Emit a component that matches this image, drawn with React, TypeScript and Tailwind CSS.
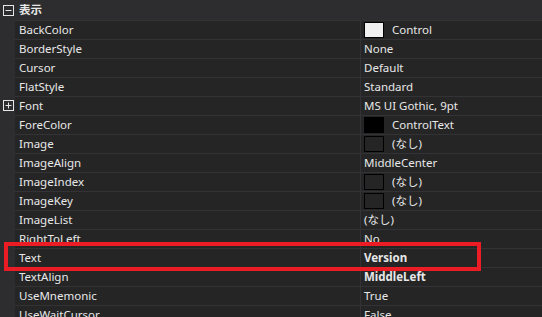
type Row = { name: string; value: string; swatch?: string; bold?: boolean; expand?: boolean };

const rows: Row[] = [
  { name: "BackColor", value: "Control", swatch: "#f0f0f0" },
  { name: "BorderStyle", value: "None" },
  { name: "Cursor", value: "Default" },
  { name: "FlatStyle", value: "Standard" },
  { name: "Font", value: "MS UI Gothic, 9pt", expand: true },
  { name: "ForeColor", value: "ControlText", swatch: "#000000" },
  { name: "Image", value: "(なし)", swatch: "transparent" },
  { name: "ImageAlign", value: "MiddleCenter" },
  { name: "ImageIndex", value: "(なし)", swatch: "transparent" },
  { name: "ImageKey", value: "(なし)", swatch: "transparent" },
  { name: "ImageList", value: "(なし)" },
  { name: "RightToLeft", value: "No" },
  { name: "Text", value: "Version", bold: true },
  { name: "TextAlign", value: "MiddleLeft", bold: true },
  { name: "UseMnemonic", value: "True" },
  { name: "UseWaitCursor", value: "False" },
];

function BoxIcon({ plus }: { plus?: boolean }) {
  return (
    <svg width="11" height="11" viewBox="0 0 11 11" className="block">
      <rect x="0.5" y="0.5" width="10" height="10" fill="none" stroke="#e6e6e6" />
      <line x1="2.5" y1="5.5" x2="8.5" y2="5.5" stroke="#e6e6e6" />
      {plus && <line x1="5.5" y1="2.5" x2="5.5" y2="8.5" stroke="#e6e6e6" />}
    </svg>
  );
}

export default function App() {
  return (
    <div
      className="relative w-[542px] h-[317px] overflow-hidden bg-[#2d2d30] text-[11.5px] text-[#e8e8e8]"
      style={{ fontFamily: '"Noto Sans", "Noto Sans CJK JP", sans-serif' }}
    >
      <div className="flex h-[20px] items-center">
        <div className="flex w-[15px] justify-center pl-[2px]">
          <BoxIcon />
        </div>
        <span className="pl-[4px] font-bold" style={{ fontFamily: '"Noto Sans CJK JP", sans-serif' }}>表示</span>
      </div>
      <div className="flex flex-col">
        {rows.map((r) => (
          <div key={r.name} className="flex h-[19px]">
            <div className="flex w-[15px] shrink-0 items-center justify-center pl-[2px]">
              {r.expand && <BoxIcon plus />}
            </div>
            <div className="flex flex-1 border-t border-[#333337] bg-[#252526]">
              <div className="flex w-[346px] items-center border-r border-[#333337] pl-[4px] leading-none">
                {r.name}
              </div>
              <div className="flex flex-1 items-center pl-[3px] leading-none">
                {r.swatch && (
                  <span
                    className="mr-[8px] h-[16px] w-[20px] shrink-0 border border-black"
                    style={{ background: r.swatch }}
                  />
                )}
                <span className={r.bold ? "font-bold" : ""}>{r.value}</span>
              </div>
            </div>
          </div>
        ))}
      </div>
      <div className="absolute left-[4px] top-[242px] h-[29px] w-[477px] border-4 border-[#ec1c24]" />
    </div>
  );
}
